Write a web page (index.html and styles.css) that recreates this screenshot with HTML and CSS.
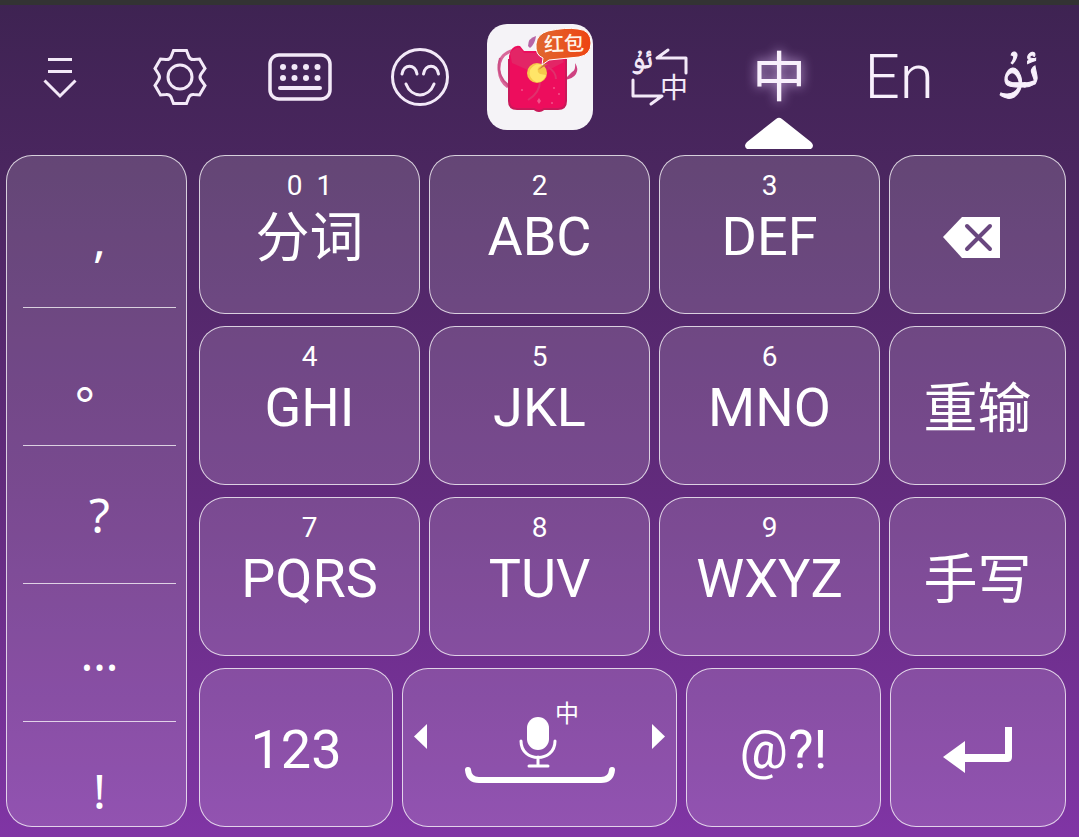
FILE: index.html
```html
<!DOCTYPE html>
<html lang="zh">
<head>
<meta charset="utf-8">
<meta name="viewport" content="width=device-width, initial-scale=1">
<title>Keyboard</title>
<link rel="stylesheet" href="styles.css">
</head>
<body>
<nav class="toolbar" aria-label="Toolbar">
  <button class="tool" aria-label="Hide keyboard">
    <svg width="34" height="42" viewBox="0 0 34 42" class="line"><path d="M5 3.500h24M5 15.500h24M1.500 24.500 17 40 32.500 24.500"/></svg>
  </button>
  <button class="tool" aria-label="Settings">
    <svg width="56" height="58" viewBox="0 0 56 58" class="line"><path d="M21.500 2.500h13l2.500 6.500q1.500 3 5 2.500l5.500-.500 5.500 9.500-4 5.500q-2 3 0 6l4 5.500-5.500 9.500-5.500-.5q-3.500-.5-5 2.500l-2.500 6.500h-13L19 49q-1.500-3-5-2.500L8.500 47 3 37.500 6.500 32q2-3 0-6L3 20.500 8.500 11l5.500.5q3.500.5 5-2.500z"/><circle cx="28" cy="29" r="12"/></svg>
  </button>
  <button class="tool" aria-label="Keyboard layout">
    <svg width="64" height="50" viewBox="0 0 64 50" class="line"><rect x="2" y="3" width="60" height="44" rx="9" stroke-width="3.500"/><path d="M12 36h40" stroke-width="4" stroke-linecap="round"/><g fill="#f3e9f8" stroke="none"><circle cx="15" cy="15" r="3"/><circle cx="26.500" cy="15" r="3"/><circle cx="38" cy="15" r="3"/><circle cx="49.500" cy="15" r="3"/><circle cx="15" cy="26" r="3"/><circle cx="26.500" cy="26" r="3"/><circle cx="38" cy="26" r="3"/><circle cx="49.500" cy="26" r="3"/></g></svg>
  </button>
  <button class="tool" aria-label="Emoji">
    <svg width="58" height="58" viewBox="0 0 58 58" class="line"><circle cx="29" cy="29" r="27.500"/><path d="M11 26c1.500-10.500 13.500-10.500 15 0M32.500 26c1.500-10.500 13.500-10.500 15 0M15 36c5.500 14.500 22.500 14.500 28 0" stroke-linecap="round"/></svg>
  </button>
  <button class="tool" aria-label="红包">
    <svg width="106" height="106" viewBox="0 0 106 106">
      <defs><linearGradient id="tag" x1="0" x2="1"><stop offset="0" stop-color="#e0682f"/><stop offset="1" stop-color="#ee4413"/></linearGradient></defs>
      <rect width="106" height="106" rx="20" fill="#f5f3f7"/>
      <path d="M27 26q-16 4-15 20 1 12 9 17" fill="none" stroke="#d9689a" stroke-width="3"/>
      <path d="M13 34q-4 13 4 23 3 2 5 6" fill="none" stroke="#cb4f86" stroke-width="2"/>
      <path d="M41 22q0-8 8-10-1 8-6 12z" fill="#b765a6"/>
      <path d="M88 39q1 7-3 9-4 4-8 8 9-1 12-6 3-5-1-11z" fill="#ce4281"/>
      <path d="M22 32Q25 20 33 22l4 5h36q6 0 6 7v43q0 8-8 8H57q-5 5-10 0H30q-8 0-8-8z" fill="#ed0d5d"/>
      <path d="M23 29q5-6 10-5l4 5h35l5 9-25 13-27-12z" fill="#e32566"/>
      <path d="M22 35v42q0 8 8 8h17q5 4 10 0h14q8 0 8-8V35" fill="none" stroke="#c91959" stroke-width="2"/>
      <path d="M53 57q0 12-12 19M61 43q8 5 8 12" fill="none" stroke="#e0306c" stroke-width="2"/>
      <g fill="#f0558b"><circle cx="35" cy="66" r="1"/><circle cx="67" cy="64" r="1"/><circle cx="65" cy="79" r="1"/><circle cx="72" cy="70" r="1"/><path d="m52 74 2 3-2 3-2-3z"/></g>
      <circle cx="50" cy="49" r="10" fill="#f5c84a"/>
      <path d="M43 46q5-8 12-5-8 4-2 9l6 1q-3 8-10 7-8-4-6-12z" fill="#ffe568"/>
      <path d="m51 46 6-6h4z" fill="#c8703d"/>
      <path d="M61 7Q79 3 91 5q13 1 13 14 0 12-12 14l-30 3-7 5 1-7q-8-3-7-14 1-10 12-13z" fill="url(#tag)" stroke="#fff" stroke-width="1"/>
      <text x="57" y="27" font-size="20" fill="#fff3e8" class="cjk medium" transform="rotate(-2 76 20)">红包</text>
    </svg>
  </button>
  <button class="tool" aria-label="Switch language">
    <svg width="60" height="60" viewBox="0 0 60 60" class="line"><path d="M39 3 28 11h29v15M4 33v16h29L22 57" stroke-linejoin="round" stroke-linecap="round"/><g fill="#f3e9f8" stroke="none"><text x="3" y="21" font-size="28" class="naskh" stroke="#f3e9f8" stroke-width="1">ئۇ</text><text x="31" y="51" font-size="28" class="cjk">中</text></g></svg>
  </button>
  <button class="tool active" aria-label="中文" aria-pressed="true">
    <span class="zh">中</span>
    <svg class="pointer" width="68" height="32" viewBox="0 0 68 32"><path d="M31 2q3-2.500 6 0l29 23q4 4 0 7H2q-4-3 0-7z" fill="#fff"/></svg>
  </button>
  <button class="tool"><span class="en">En</span></button>
  <button class="tool"><span class="ug naskh" lang="ug">ئۇ</span></button>
</nav>
<main class="keyboard">
  <div class="marks">
    <button class="mark">,</button>
    <button class="mark stop">。</button>
    <button class="mark">?</button>
    <button class="mark">…</button>
    <button class="mark">!</button>
  </div>
  <div class="keys">
    <div class="row">
      <button class="key word"><span class="hint">0&nbsp; 1</span>分词</button>
      <button class="key"><span class="hint">2</span>ABC</button>
      <button class="key"><span class="hint">3</span>DEF</button>
      <button class="key erase" aria-label="Backspace"><svg width="58" height="42" viewBox="0 0 58 42"><path d="M1 21 20 1h38v41H20z" fill="#fff"/><path d="m25 10 23 23M48 10 25 33" stroke="#69477f" stroke-width="4" stroke-linecap="round"/></svg></button>
    </div>
    <div class="row">
      <button class="key"><span class="hint">4</span>GHI</button>
      <button class="key"><span class="hint">5</span>JKL</button>
      <button class="key"><span class="hint">6</span>MNO</button>
      <button class="key word">重输</button>
    </div>
    <div class="row">
      <button class="key"><span class="hint">7</span>PQRS</button>
      <button class="key"><span class="hint">8</span>TUV</button>
      <button class="key"><span class="hint">9</span>WXYZ</button>
      <button class="key word">手写</button>
    </div>
    <div class="row bottom">
      <button class="key">123</button>
      <button class="key space" aria-label="Space">
        <svg width="13" height="37" viewBox="0 0 13 37"><path d="M13 0v25L0 12.500z" fill="#fff"/></svg>
        <svg width="150" height="98" viewBox="0 -8 150 98" fill="none" stroke="#fff"><rect x="62" y="16" width="22" height="33" rx="11" fill="#fff" stroke="none"/><path d="M56 40c0 22 34 22 34 0M73 56v8M64 65h19" stroke-width="3" stroke-linecap="round"/><path d="M3 69q1 10 11 10h122q10 0 11-10" stroke-width="6" stroke-linecap="round"/><text x="90" y="21" font-size="24" fill="#fff" stroke="none" class="cjk">中</text></svg>
        <svg width="13" height="37" viewBox="0 0 13 37"><path d="M0 0v25l13-12.500z" fill="#fff"/></svg>
      </button>
      <button class="key">@?!</button>
      <button class="key" aria-label="Enter"><svg width="70" height="48" viewBox="0 0 70 48"><path d="M62 1h7v30q0 5-5 5H22v11L0 31l22-16v13h40z" fill="#fff"/></svg></button>
    </div>
  </div>
</main>
</body>
</html>
```

FILE: styles.css
```css
* { box-sizing: border-box; }

body {
  margin: 0;
  min-height: 100vh;
  display: flex;
  flex-direction: column;
  border-top: 5px solid #333;
  background: linear-gradient(#3e2352, #4a265f 20%, #632b7e 60%, #8035a5);
  font-family: Roboto, "Noto Sans CJK SC", sans-serif;
  color: #fff;
}

button {
  margin: 0;
  padding: 0;
  border: 0;
  background: none;
  color: inherit;
  font: inherit;
}

svg { display: block; flex: none; overflow: visible; }

.toolbar { display: flex; height: 144px; }

.tool {
  flex: 1 1 0;
  display: flex;
  align-items: center;
  justify-content: center;
  position: relative;
  color: #f8f0fc;
}

.line { fill: none; stroke: #f3e9f8; stroke-width: 3; }
.cjk { font-family: "Noto Sans CJK SC", sans-serif; }
.medium { font-weight: 500; }
.naskh { font-family: "Noto Naskh Arabic", "DejaVu Sans", sans-serif; }

.zh {
  padding-bottom: 6px;
  font: 400 54px/60px "Noto Sans CJK SC", sans-serif;
  text-shadow: 0 0 12px #d9b8f0;
}
.en {
  font-size: 62px;
  line-height: 72px;
  font-weight: 300;
}
.ug {
  padding-bottom: 4px;
  font-size: 56px;
  line-height: 60px;
  -webkit-text-stroke: 1px #f8f0fc;
}

.pointer {
  position: absolute;
  bottom: 0;
  left: 50%;
  transform: translateX(-50%);
}

.keyboard {
  flex: 1;
  display: grid;
  grid-template-columns: 181fr 867fr;
  gap: 12px;
  padding: 6px 13px 10px 6px;
}

.marks, .key {
  border: 1px solid rgba(255, 255, 255, 0.75);
  border-radius: 26px;
  background: rgba(255, 255, 255, 0.15);
}

.marks {
  display: flex;
  flex-direction: column;
  height: 0;
  min-height: 100%;
  padding: 14px 10px 0 16px;
  overflow: hidden;
}
.mark {
  flex: 0 0 138px;
  border-bottom: 1px solid rgba(255, 255, 255, 0.75);
  font: 48px/64px "Noto Sans", "Noto Sans CJK SC", sans-serif;
}
.stop { padding-top: 6px; font-weight: 500; }

.keys { display: grid; grid-auto-rows: minmax(140px, 1fr); gap: 12px; }
.row { display: grid; grid-template-columns: 221fr 221fr 221fr 177fr; gap: 9px; }
.bottom { grid-template-columns: 194fr 275fr 195fr 176fr; }

.key {
  position: relative;
  display: flex;
  align-items: center;
  justify-content: center;
  padding-top: 4px;
  font-size: 54px;
  line-height: 64px;
}
.word { padding-top: 8px; }
.erase { padding-right: 14px; }
.hint {
  position: absolute;
  top: 14px;
  left: 0;
  right: 0;
  font-size: 28px;
  line-height: 32px;
}
.space { justify-content: space-between; padding: 0 11px 11px; }
```
